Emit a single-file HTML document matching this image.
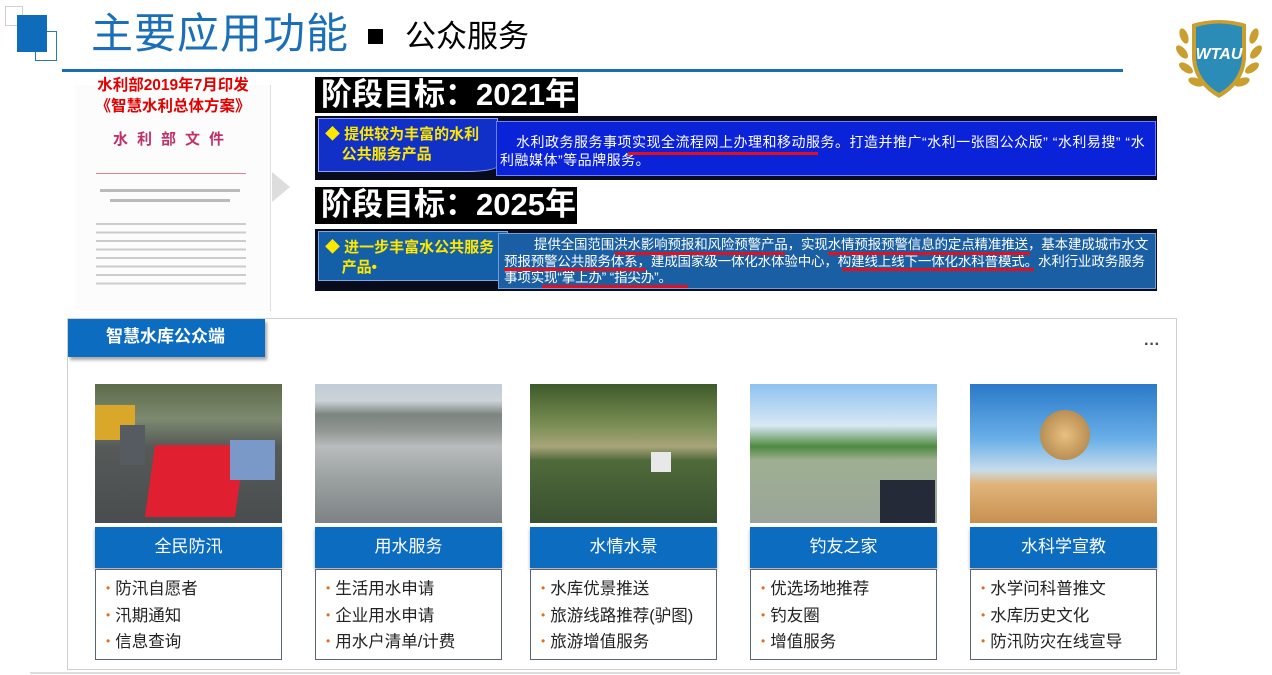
<!DOCTYPE html>
<html><head><meta charset="utf-8">
<style>
*{margin:0;padding:0;box-sizing:border-box}
body{width:1272px;height:675px;background:#fff;position:relative;overflow:hidden;font-family:"Liberation Sans","Noto Sans CJK SC",sans-serif}
.a{position:absolute}
.blk{background:#000;color:#fff;font-weight:bold;font-size:31px;line-height:36px;padding-left:6px}
.band{background:#070b1c}
.tag{color:#ffe800;font-weight:bold;font-size:15px;line-height:20px}
.txt{color:#fff;white-space:nowrap}
.ul{position:absolute;height:3px;background:#e01020}
.img{position:absolute;width:187px;height:139px;top:384px}
.hd{position:absolute;width:187px;height:41px;top:527px;background:#0c6cc0;color:#fff;font-size:17px;text-align:center;line-height:40px;box-shadow:0 2px 3px rgba(0,0,0,.35)}
.ls{position:absolute;width:187px;height:91px;top:569px;border:1.5px solid #5a6475;background:#fff;padding:6px 0 0 10px;font-size:16.5px;line-height:25.5px;color:#222}
.ls span{color:#e07020;font-size:12px;margin-right:5px;vertical-align:2px}
</style></head><body>
<div class="a" style="left:5px;top:6px;width:18px;height:20px;border:1px solid #cfcfcf"></div>
<div class="a" style="left:35px;top:31px;width:22px;height:30px;border:1.5px solid #2a78c0"></div>
<div class="a" style="left:17px;top:15px;width:30px;height:37px;background:#0f6cba"></div>
<div class="a" style="left:91px;top:10px;font-size:42px;color:#1a6fb8;line-height:48px;letter-spacing:1px">主要应用功能</div>
<div class="a" style="left:368px;top:29px;width:15px;height:15px;background:#000"></div>
<div class="a" style="left:405px;top:19px;font-size:31px;color:#000;line-height:36px">公众服务</div>
<div class="a" style="left:62px;top:69px;width:1061px;height:3px;background:#1b6ea7"></div>
<svg class="a" style="left:1170px;top:14px" width="98" height="90" viewBox="0 0 98 90">
<g fill="#c9a030">
<ellipse cx="14" cy="22" rx="4" ry="8" transform="rotate(-20 14 22)"/><ellipse cx="12" cy="38" rx="4" ry="8" transform="rotate(-40 12 38)"/><ellipse cx="16" cy="54" rx="4" ry="8" transform="rotate(-55 16 54)"/><ellipse cx="26" cy="68" rx="4" ry="8" transform="rotate(-70 26 68)"/>
<ellipse cx="84" cy="22" rx="4" ry="8" transform="rotate(20 84 22)"/><ellipse cx="86" cy="38" rx="4" ry="8" transform="rotate(40 86 38)"/><ellipse cx="82" cy="54" rx="4" ry="8" transform="rotate(55 82 54)"/><ellipse cx="72" cy="68" rx="4" ry="8" transform="rotate(70 72 68)"/>
</g>
<path d="M22 10 Q49 2 76 10 L76 45 Q74 70 49 84 Q24 70 22 45Z" fill="#c9a030"/>
<path d="M26 13 Q49 6 72 13 L72 45 Q70 67 49 79 Q28 67 26 45Z" fill="#2c8cb8"/>
<text x="49" y="45" text-anchor="middle" font-family="Liberation Sans" font-weight="bold" font-style="italic" font-size="16" fill="#fff">WTAU</text>
</svg>
<div class="a" style="left:75px;top:85px;width:196px;height:226px;background:#fcfcfc;border-right:1px solid #ddd"></div>
<div class="a" style="left:78px;top:75px;width:190px;text-align:center;color:#e00000;font-weight:bold;font-size:15.5px;line-height:21px">水利部2019年7月印发<br>《智慧水利总体方案》</div>
<div class="a" style="left:88px;top:128px;width:170px;text-align:center;color:#c0306a;font-size:15px;font-weight:bold;letter-spacing:9px">水利部文件</div>
<div class="a" style="left:96px;top:173px;width:150px;height:1px;background:#e08090"></div>
<div class="a" style="left:100px;top:189px;width:140px;height:3px;background:#bbb"></div>
<div class="a" style="left:110px;top:199px;width:120px;height:3px;background:#bbb"></div>
<div class="a" style="left:96px;top:218px;width:150px;height:70px;background:repeating-linear-gradient(#fcfcfc 0 5px,#ccc 5px 7px,#fcfcfc 7px 8.5px)"></div>
<div class="a" style="left:272px;top:172px;width:0;height:0;border-left:18px solid #ddd;border-top:15px solid transparent;border-bottom:15px solid transparent"></div>

<div class="a blk" style="left:315px;top:77px;width:263px;height:36px">阶段目标：2021年</div>
<div class="a band" style="left:315px;top:116px;width:842px;height:64px"></div>
<div class="a" style="left:318px;top:118px;width:180px;height:54px;background:#1030c8;border:1px solid #8fa0ff;border-radius:0 0 30px 0/0 0 6px 0"></div>
<div class="a tag" style="left:325px;top:125px">◆ 提供较为丰富的水利<br>&nbsp;&nbsp;&nbsp;&nbsp;公共服务产品</div>
<div class="a" style="left:496px;top:121px;width:660px;height:55px;background:#0a22d8;border:1px solid #6b7fff"></div>
<div class="a txt" style="left:516px;top:133px;font-size:14px;line-height:18px;letter-spacing:0.5px">水利政务服务事项实现全流程网上办理和移动服务。打造并推广“水利一张图公众版” “水利易搜” “水</div>
<div class="a txt" style="left:500px;top:151px;font-size:14px;line-height:18px;letter-spacing:0.5px">利融媒体”等品牌服务。</div>
<div class="ul" style="left:628px;top:152px;width:190px"></div>

<div class="a blk" style="left:315px;top:187px;width:262px;height:37px">阶段目标：2025年</div>
<div class="a band" style="left:315px;top:229px;width:842px;height:62px"></div>
<div class="a" style="left:318px;top:231px;width:190px;height:50px;background:#1460a8;border:1px solid #7fa8e0"></div>
<div class="a tag" style="left:325px;top:238px">◆ 进一步丰富水公共服务<br>&nbsp;&nbsp;&nbsp;&nbsp;产品•</div>
<div class="a" style="left:498px;top:233px;width:658px;height:56px;background:#1a5fa3;border:1px solid #6f9fd8"></div>
<div class="a txt" style="left:534px;top:237px;font-size:13.5px;line-height:16.5px;letter-spacing:-0.15px">提供全国范围洪水影响预报和风险预警产品，实现水情预报预警信息的定点精准推送，基本建成城市水文</div>
<div class="a txt" style="left:504px;top:254px;font-size:13.5px;line-height:16.5px;letter-spacing:-0.15px">预报预警公共服务体系，建成国家级一体化水体验中心，构建线上线下一体化水科普模式。水利行业政务服务</div>
<div class="a txt" style="left:504px;top:270px;font-size:13.5px;line-height:16.5px;letter-spacing:-0.15px">事项实现“掌上办” “指尖办”。</div>
<div class="ul" style="left:615px;top:252px;width:170px"></div>
<div class="ul" style="left:828px;top:252px;width:202px"></div>
<div class="ul" style="left:504px;top:268px;width:142px"></div>
<div class="ul" style="left:842px;top:268px;width:192px"></div>
<div class="ul" style="left:542px;top:285px;width:146px"></div>

<div class="a" style="left:67px;top:318px;width:1110px;height:352px;border:1.5px solid #d0d0d0"></div>
<div class="a" style="left:68px;top:319px;width:197px;height:38px;background:#0c6cc0;color:#fff;font-size:17px;line-height:36px;padding-left:38px;font-weight:bold;box-shadow:2px 3px 3px rgba(0,0,0,.35)">智慧水库公众端</div>
<div class="a" style="left:1144px;top:336px;font-size:16px;color:#445;font-weight:bold">···</div>

<div class="img" style="left:95px;background:linear-gradient(180deg,#5d6b4a 0%,#7d8a70 25%,#555a58 45%,#4a4d4f 100%)"></div>
<div class="a" style="left:95px;top:405px;width:40px;height:35px;background:#d9a82a"></div>
<div class="a" style="left:150px;top:445px;width:90px;height:72px;background:#e02030;transform:skewX(-8deg)"></div>
<div class="a" style="left:120px;top:425px;width:25px;height:40px;background:#555b60"></div>
<div class="a" style="left:230px;top:440px;width:45px;height:40px;background:#7a99c8"></div>
<div class="img" style="left:315px;background:linear-gradient(180deg,#c0ccd8 0%,#cdd3d8 12%,#7c8480 22%,#909592 33%,#b8bcbc 45%,#9fa4a4 65%,#7d8384 100%)"></div>
<div class="img" style="left:530px;background:linear-gradient(180deg,#3e5a2a 0%,#7a8f55 30%,#a9a47a 45%,#4f6a3a 55%,#3a5030 100%)"></div>
<div class="a" style="left:651px;top:452px;width:20px;height:20px;background:#e8e8e8"></div>
<div class="img" style="left:750px;background:linear-gradient(180deg,#8ec2f0 0%,#d8e8f4 30%,#4f8a40 45%,#9eaf92 55%,#9aa59a 100%)"></div>
<div class="a" style="left:880px;top:480px;width:55px;height:43px;background:#252a38"></div>
<div class="img" style="left:970px;background:linear-gradient(180deg,#2a78c8 0%,#6ab0e8 40%,#c8dcea 62%,#e0b47a 72%,#c89050 100%)"></div>
<div class="a" style="left:1040px;top:410px;width:50px;height:50px;border-radius:50%;background:radial-gradient(#e8c080,#a57a40)"></div>

<div class="hd" style="left:95px">全民防汛</div>
<div class="hd" style="left:315px">用水服务</div>
<div class="hd" style="left:530px">水情水景</div>
<div class="hd" style="left:750px">钓友之家</div>
<div class="hd" style="left:970px">水科学宣教</div>
<div class="ls" style="left:95px"><span>•</span>防汛自愿者<br><span>•</span>汛期通知<br><span>•</span>信息查询</div>
<div class="ls" style="left:315px"><span>•</span>生活用水申请<br><span>•</span>企业用水申请<br><span>•</span>用水户清单/计费</div>
<div class="ls" style="left:530px"><span>•</span>水库优景推送<br><span>•</span>旅游线路推荐(驴图)<br><span>•</span>旅游增值服务</div>
<div class="ls" style="left:750px"><span>•</span>优选场地推荐<br><span>•</span>钓友圈<br><span>•</span>增值服务</div>
<div class="ls" style="left:970px"><span>•</span>水学问科普推文<br><span>•</span>水库历史文化<br><span>•</span>防汛防灾在线宣导</div>
<div class="a" style="left:30px;top:672px;width:1150px;height:2px;background:#ddd"></div>
</body></html>
